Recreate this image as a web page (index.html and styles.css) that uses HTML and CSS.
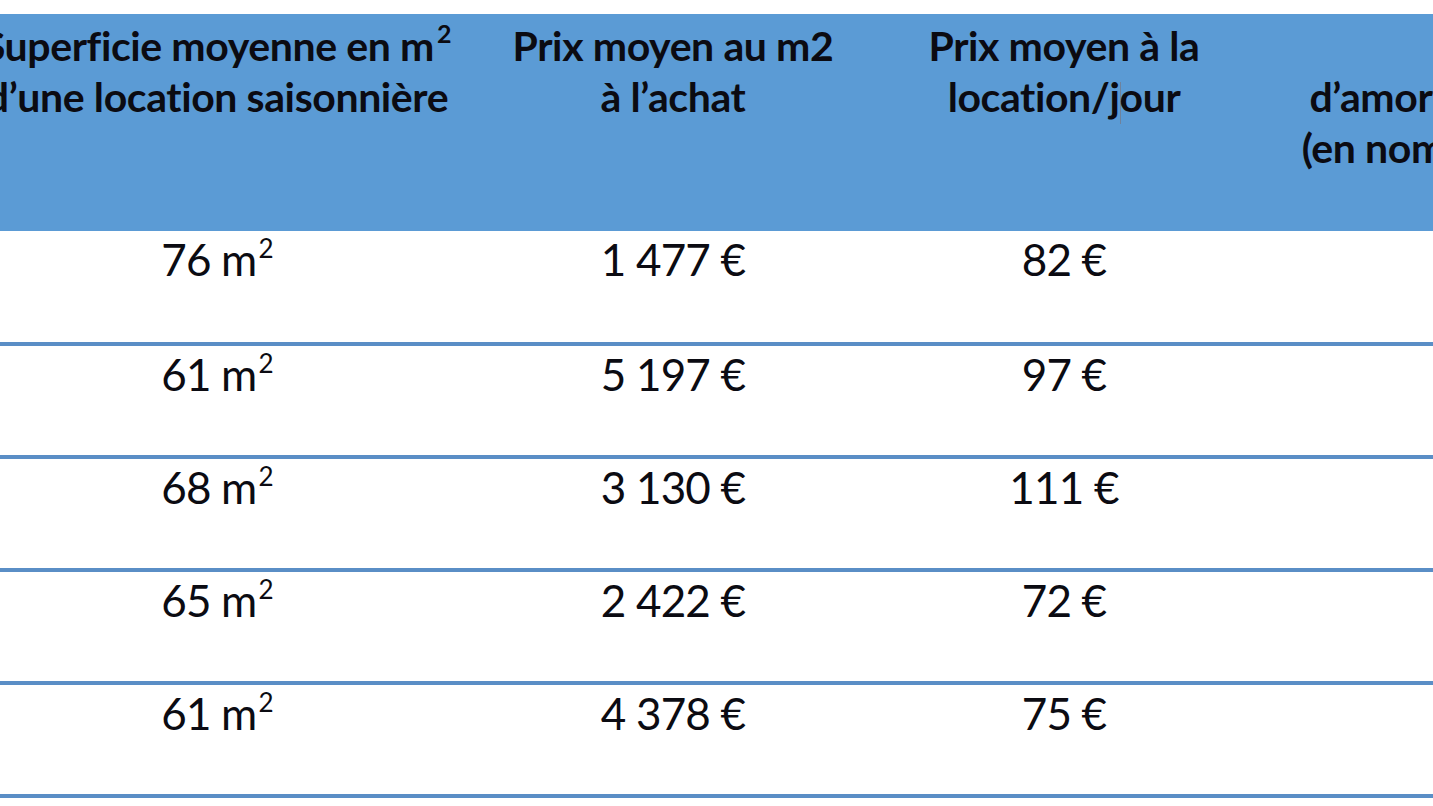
FILE: index.html
```html
<!DOCTYPE html>
<html lang="fr">
<head>
<meta charset="utf-8">
<title>Tableau location saisonnière</title>
<link rel="stylesheet" href="styles.css">
</head>
<body>
<div class="frame">
  <table class="grid">
    <colgroup>
      <col class="c1"><col class="c2"><col class="c3"><col class="c4">
    </colgroup>
    <thead>
      <tr>
        <th>Superficie moyenne en m<sup>2</sup><br>d’une location saisonnière</th>
        <th>Prix moyen au m2<br>à l’achat</th>
        <th>Prix moyen à la<br>location/j<span class="caret"></span>our</th>
        <th><span class="hidden-line">Durée</span><br>d’amortissement<br>(en nombre d’ans)</th>
      </tr>
    </thead>
    <tbody>
      <tr><td>76 m<sup>2</sup></td><td>1 477 €</td><td>82 €</td><td></td></tr>
      <tr><td>61 m<sup>2</sup></td><td>5 197 €</td><td>97 €</td><td></td></tr>
      <tr><td>68 m<sup>2</sup></td><td>3 130 €</td><td>111 €</td><td></td></tr>
      <tr><td>65 m<sup>2</sup></td><td>2 422 €</td><td>72 €</td><td></td></tr>
      <tr><td>61 m<sup>2</sup></td><td>4 378 €</td><td>75 €</td><td></td></tr>
    </tbody>
  </table>
</div>
</body>
</html>
```
FILE: styles.css
```css
html, body {
  margin: 0;
  padding: 0;
  background: #ffffff;
}
body {
  width: 1433px;
  height: 806px;
  overflow: hidden;
  font-family: Lato, "Open Sans", "DejaVu Sans", sans-serif;
  color: #0b0b12;
}
.frame {
  padding-top: 14px;
  margin-left: -42px;
}
.grid {
  border-collapse: collapse;
  table-layout: fixed;
  width: 1700px;
}
.c1 { width: 518px; }
.c2 { width: 394px; }
.c3 { width: 388px; }
.c4 { width: 400px; }

.grid th {
  background: #5b9bd5;
  height: 217px;
  box-sizing: border-box;
  padding: 6px 0 0 0;
  vertical-align: top;
  text-align: center;
  font-weight: 700;
  font-size: 41px;
  line-height: 51px;
  white-space: nowrap;
  letter-spacing: -0.4px;
}
.grid th sup {
  font-size: 25px;
  line-height: 0;
  vertical-align: 0.72em;
  margin-left: 3px;
}
.hidden-line {
  visibility: hidden;
}
.caret {
  display: inline-block;
  width: 1px;
  height: 42px;
  background: #6f829c;
  vertical-align: -12px;
  margin: 0 -1px 0 0;
}
.grid td {
  height: 113px;
  box-sizing: border-box;
  padding: 2px 0 0 0;
  vertical-align: top;
  text-align: center;
  font-size: 44px;
  line-height: 53px;
  border-bottom: 4px solid #5a8ec6;
  white-space: nowrap;
  letter-spacing: -0.8px;
}
.grid td sup {
  font-size: 26px;
  line-height: 0;
  vertical-align: 0.7em;
  margin-left: 2px;
}
```
